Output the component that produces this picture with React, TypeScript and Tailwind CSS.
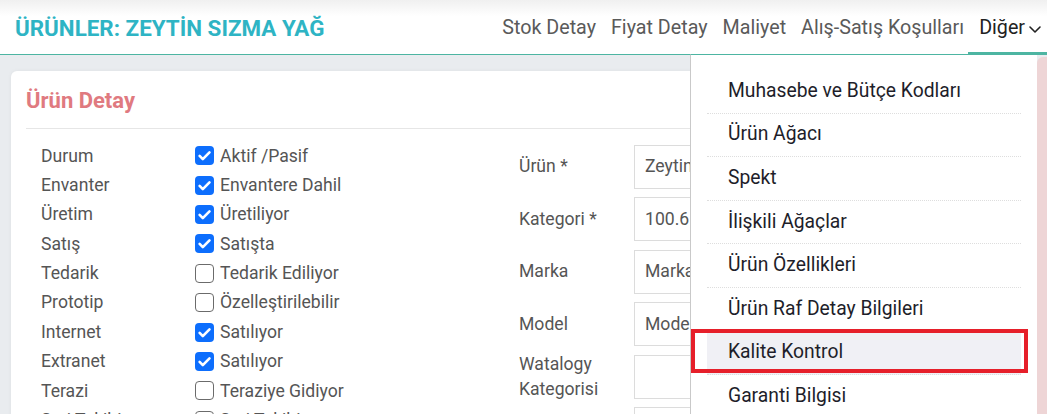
import React from "react";

const leftRows: [string, string, boolean][] = [
  ["Durum", "Aktif /Pasif", true],
  ["Envanter", "Envantere Dahil", true],
  ["Üretim", "Üretiliyor", true],
  ["Satış", "Satışta", true],
  ["Tedarik", "Tedarik Ediliyor", false],
  ["Prototip", "Özelleştirilebilir", false],
  ["Internet", "Satılıyor", true],
  ["Extranet", "Satılıyor", true],
  ["Terazi", "Teraziye Gidiyor", false],
  ["Seri Takibi", "Seri Takibi", false],
];

const midRows: [string, string][] = [
  ["Ürün *", "Zeytin Sızma Yağ"],
  ["Kategori *", "100.61 Zeytinyağı"],
  ["Marka", "Marka"],
  ["Model", "Model"],
  ["Watalogy Kategorisi", ""],
  ["Barkod", ""],
];

const menu = [
  "Muhasebe ve Bütçe Kodları",
  "Ürün Ağacı",
  "Spekt",
  "İlişkili Ağaçlar",
  "Ürün Özellikleri",
  "Ürün Raf Detay Bilgileri",
  "Kalite Kontrol",
  "Garanti Bilgisi",
];

function Check({ on }: { on: boolean }) {
  return on ? (
    <span className="flex h-[19px] w-[19px] shrink-0 items-center justify-center rounded-[4px] bg-[#0d6efd]">
      <svg width="15" height="15" viewBox="0 0 16 16" fill="none">
        <path d="M2.8 8.4l3.4 3.4L13.3 4.6" stroke="#fff" strokeWidth="2.8" strokeLinecap="round" strokeLinejoin="round" />
      </svg>
    </span>
  ) : (
    <span className="h-[19px] w-[19px] shrink-0 rounded-[4px] border border-[#6b6b6b] bg-white" />
  );
}

export default function App() {
  return (
    <div
      className="relative h-[414px] w-[1047px] overflow-hidden bg-[#e9ecef]"
      style={{ fontFamily: "Roboto, 'Noto Sans', sans-serif" }}
    >
      {/* Header */}
      <div className="relative flex h-[55px] items-center justify-between border-b border-[#4db5a2] bg-linear-to-b from-[#f0f0f0] to-white to-30% pl-[15px]">
        <div className="mt-[3px] text-[22.4px] font-bold leading-none text-[#2eb4c4]">
          ÜRÜNLER: ZEYTİN SIZMA YAĞ
        </div>
        <div className="flex h-full items-center gap-[15px] pr-[5px] pt-[2px] text-[19.7px] text-[#5a5a5a]">
          <span>Stok Detay</span>
          <span>Fiyat Detay</span>
          <span>Maliyet</span>
          <span>Alış-Satış Koşulları</span>
          <span className="flex items-center gap-[3px] text-[#222]">
            Diğer
            <svg width="14" height="14" viewBox="0 0 14 14" fill="none" className="mt-[2px]">
              <path d="M2 5l5 5 5-5" stroke="#222" strokeWidth="1.6" strokeLinecap="round" strokeLinejoin="round" />
            </svg>
          </span>
        </div>
        <div className="absolute bottom-[-1px] right-0 h-[3px] w-[79px] bg-[#4db5a2]" />
      </div>

      {/* Card */}
      <div className="mx-[11px] mt-[16px] h-[400px] rounded-[6px] bg-white px-[15px] pt-[14px] shadow-[0_0_4px_rgba(0,0,0,0.05)]">
        <div className="h-[31px] text-[22px] font-bold leading-[31px] text-[#e07a80]">Ürün Detay</div>
        <div className="mt-[12px] border-t border-[#e6e6e6]" />
        <div className="flex px-[15px]">
          <div className="mt-[12px] w-[478px] shrink-0">
            {leftRows.map(([l, t, on], i) => (
              <div key={i} className="flex h-[29.4px] items-center text-[17.6px] text-[#555]">
                <span className="w-[154px] shrink-0">{l}</span>
                <Check on={on} />
                <span className="ml-[6px]">{t}</span>
              </div>
            ))}
          </div>
          <div className="mt-[15.5px] flex-1">
            {midRows.map(([l, v], i) => (
              <div key={i} className="mb-[8.6px] flex h-[44px] items-center">
                <span className="w-[115px] shrink-0 text-[17.6px] leading-[25px] text-[#555]">{l}</span>
                <div className="flex h-[44px] flex-1 items-center border border-[#dcdcdc] px-[10px] text-[17.6px] text-[#555]">
                  {v}
                </div>
              </div>
            ))}
          </div>
        </div>
      </div>

      {/* pink strip */}
      <div className="absolute right-0 top-[57px] h-[360px] w-[10px] rounded-tl-[6px] bg-[#eed5d6]" />

      {/* Dropdown */}
      <div className="absolute left-[690px] top-[54px] h-[370px] w-[347px] border-l border-t border-[#c9c9c9] border-t-[#4db5a2] bg-white px-[16px] pt-[15px]">
        {menu.map((m, i) => (
          <div
            key={i}
            className={`flex h-[43.6px] items-center border-b border-dotted border-[#dedede] pl-[21px] text-[19.3px] text-[#1e1e2a] ${
              m === "Kalite Kontrol" ? "bg-[#f0f0f5]" : ""
            }`}
          >
            {m}
          </div>
        ))}
      </div>
      {/* red highlight box */}
      <div className="absolute left-[691px] top-[329px] h-[44px] w-[337px] border-[4px] border-[#e61f2a]" />
    </div>
  );
}
